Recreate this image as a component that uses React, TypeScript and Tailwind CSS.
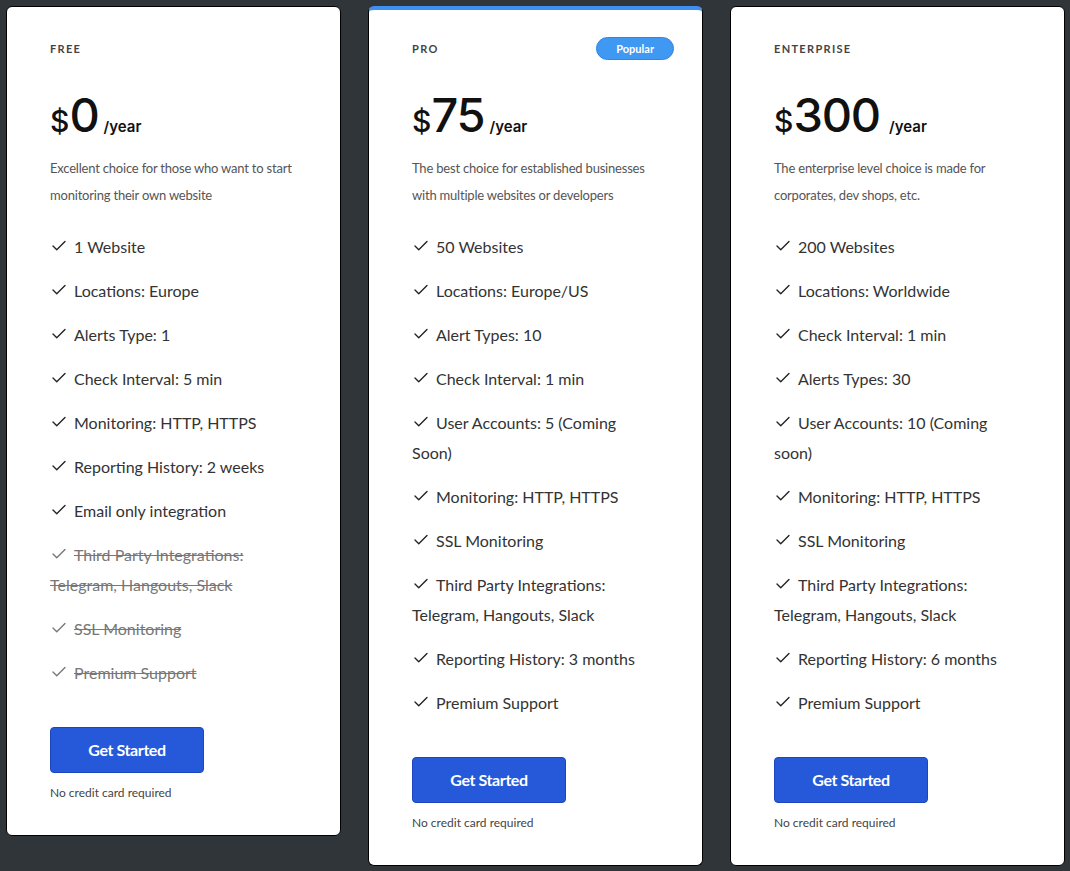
import { Check } from "lucide-react";

type Feature = { text: string; off?: boolean };

type Plan = {
  name: string;
  price: string;
  blurb: string;
  features: Feature[];
  popular?: boolean;
};

const plans: Plan[] = [
  {
    name: "Free",
    price: "0",
    blurb: "Excellent choice for those who want to start monitoring their own website",
    features: [
      { text: "1 Website" },
      { text: "Locations: Europe" },
      { text: "Alerts Type: 1" },
      { text: "Check Interval: 5 min" },
      { text: "Monitoring: HTTP, HTTPS" },
      { text: "Reporting History: 2 weeks" },
      { text: "Email only integration" },
      { text: "Third Party Integrations: Telegram, Hangouts, Slack", off: true },
      { text: "SSL Monitoring", off: true },
      { text: "Premium Support", off: true },
    ],
  },
  {
    name: "Pro",
    price: "75",
    popular: true,
    blurb: "The best choice for established businesses with multiple websites or developers",
    features: [
      { text: "50 Websites" },
      { text: "Locations: Europe/US" },
      { text: "Alert Types: 10" },
      { text: "Check Interval: 1 min" },
      { text: "User Accounts: 5 (Coming Soon)" },
      { text: "Monitoring: HTTP, HTTPS" },
      { text: "SSL Monitoring" },
      { text: "Third Party Integrations: Telegram, Hangouts, Slack" },
      { text: "Reporting History: 3 months" },
      { text: "Premium Support" },
    ],
  },
  {
    name: "Enterprise",
    price: "300",
    blurb: "The enterprise level choice is made for corporates, dev shops, etc.",
    features: [
      { text: "200 Websites" },
      { text: "Locations: Worldwide" },
      { text: "Check Interval: 1 min" },
      { text: "Alerts Types: 30" },
      { text: "User Accounts: 10 (Coming soon)" },
      { text: "Monitoring: HTTP, HTTPS" },
      { text: "SSL Monitoring" },
      { text: "Third Party Integrations: Telegram, Hangouts, Slack" },
      { text: "Reporting History: 6 months" },
      { text: "Premium Support" },
    ],
  },
];

function PlanCard({ plan }: { plan: Plan }) {
  return (
    <div
      className={
        plan.popular
          ? "w-[335px] shrink-0 rounded-md border border-black border-t-4 border-t-[#3d8ff0] bg-white px-[43px] pt-[31px] pb-[33px]"
          : "w-[335px] shrink-0 rounded-md border border-black bg-white px-[43px] pt-[34px] pb-[33px]"
      }
    >
      <div className="flex h-4 items-center justify-between">
        <span className="text-[11px] font-bold uppercase tracking-[0.12em] text-[#444]">
          {plan.name}
        </span>
        {plan.popular && (
          <span className="-mr-[15px] -mt-[2px] rounded-full border border-[#2f86e6] bg-[#3f98f2] px-[19px] py-[3px] text-[11px] font-bold leading-[15px] text-white">
            Popular
          </span>
        )}
      </div>

      <div className="mt-[34px] flex items-baseline font-['Inter',sans-serif] text-[#111]">
        <span className="text-[30px] font-medium leading-none">$</span>
        <span className="text-[47px] font-medium leading-none tracking-tight">{plan.price}</span>
        <span
          className={
            plan.name === "Enterprise"
              ? "ml-[9px] text-[15px] font-semibold"
              : "ml-[5px] text-[15px] font-semibold"
          }
        >
          /year
        </span>
      </div>

      <p className="mt-[16px] text-[13px] leading-[27px] tracking-[-0.2px] text-[#555]">
        {plan.blurb}
      </p>

      <ul className="mt-[23px] flex flex-col gap-[14px] pr-[4px]">
        {plan.features.map((f) => (
          <li
            key={f.text}
            className={
              f.off
                ? "text-[16px] leading-[30px] text-[#777] line-through"
                : "text-[16px] leading-[30px] text-[#333]"
            }
          >
            <Check
              size={18}
              strokeWidth={1.8}
              className={
                f.off
                  ? "mr-[6px] inline-block -translate-y-[2px] text-[#777]"
                  : "mr-[6px] inline-block -translate-y-[2px] text-[#222]"
              }
            />
            {f.text}
          </li>
        ))}
      </ul>

      <button className="mt-[39px] h-[46px] w-[154px] rounded border border-[#1b46bd] bg-[#2559d9] text-[16px] font-bold tracking-tight text-white">
        Get Started
      </button>
      <p className="mt-[11px] text-[12px] leading-[18px] text-[#444]">No credit card required</p>
    </div>
  );
}

export default function App() {
  return (
    <div className="min-h-[871px] w-[1070px] bg-[#2f3538] p-[6px] font-['Lato',sans-serif]">
      <div className="flex items-start gap-[27px]">
        {plans.map((p) => (
          <PlanCard key={p.name} plan={p} />
        ))}
      </div>
    </div>
  );
}
